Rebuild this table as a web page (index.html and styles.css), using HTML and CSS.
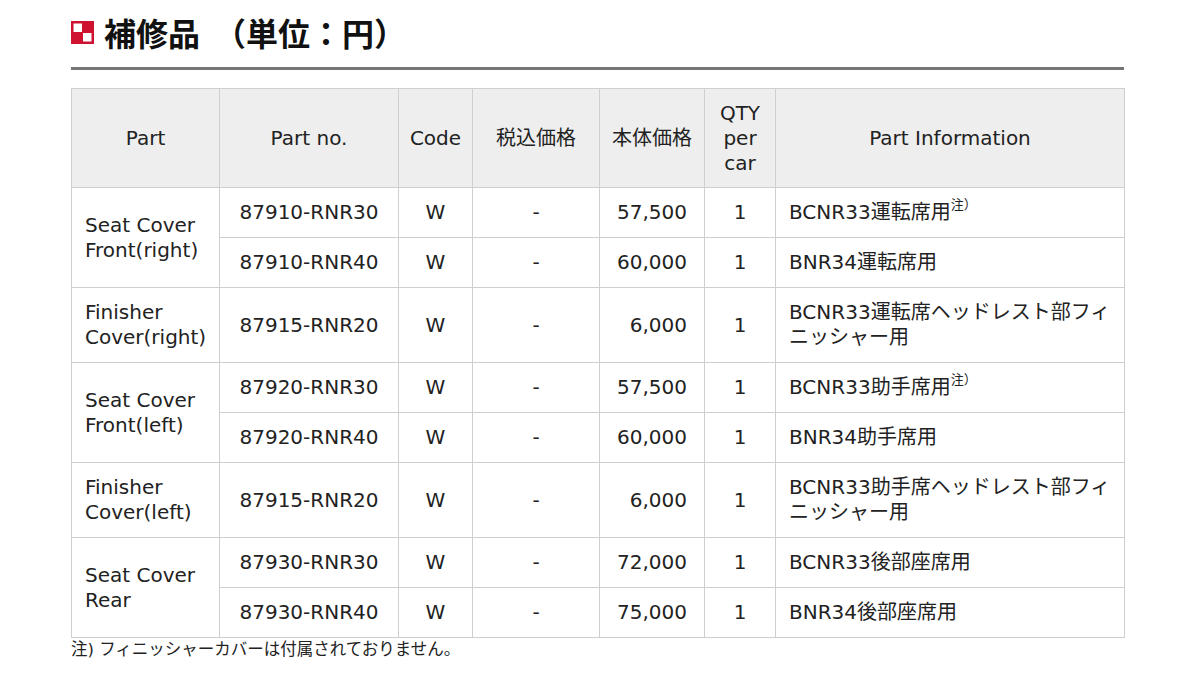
FILE: index.html
```html
<!DOCTYPE html>
<html lang="ja">
<head>
<meta charset="utf-8">
<title>補修品（単位：円）</title>
<link rel="stylesheet" href="styles.css">
</head>
<body>
<div class="page">
  <h2 class="title">
    <svg class="title-icon" width="23" height="23" viewBox="0 0 23 23" aria-hidden="true">
      <rect x="0" y="0" width="23" height="23" fill="#cf1230"/>
      <rect x="2.5" y="2.5" width="8.5" height="8.5" fill="#fff"/>
      <rect x="12" y="12" width="8.5" height="8.5" fill="#fff"/>
    </svg>
    <span class="title-text">補修品<span class="open-paren">（</span>単位：円）</span>
  </h2>

  <table class="parts">
    <colgroup>
      <col class="c-part">
      <col class="c-no">
      <col class="c-code">
      <col class="c-tax">
      <col class="c-price">
      <col class="c-qty">
      <col class="c-info">
    </colgroup>
    <thead>
      <tr>
        <th>Part</th>
        <th>Part no.</th>
        <th>Code</th>
        <th class="nowrap">税込価格</th>
        <th class="nowrap">本体価格</th>
        <th>QTY per car</th>
        <th>Part Information</th>
      </tr>
    </thead>
    <tbody>
      <tr>
        <td class="part" rowspan="2">Seat Cover<br>Front(right)</td>
        <td class="ctr">87910-RNR30</td>
        <td class="ctr">W</td>
        <td class="ctr">-</td>
        <td class="num">57,500</td>
        <td class="ctr">1</td>
        <td>BCNR33運転席用<sup>注）</sup></td>
      </tr>
      <tr>
        <td class="ctr">87910-RNR40</td>
        <td class="ctr">W</td>
        <td class="ctr">-</td>
        <td class="num">60,000</td>
        <td class="ctr">1</td>
        <td>BNR34運転席用</td>
      </tr>
      <tr>
        <td class="part">Finisher<br>Cover(right)</td>
        <td class="ctr">87915-RNR20</td>
        <td class="ctr">W</td>
        <td class="ctr">-</td>
        <td class="num">6,000</td>
        <td class="ctr">1</td>
        <td>BCNR33運転席ヘッドレスト部フィ<br>ニッシャー用</td>
      </tr>
      <tr>
        <td class="part" rowspan="2">Seat Cover<br>Front(left)</td>
        <td class="ctr">87920-RNR30</td>
        <td class="ctr">W</td>
        <td class="ctr">-</td>
        <td class="num">57,500</td>
        <td class="ctr">1</td>
        <td>BCNR33助手席用<sup>注）</sup></td>
      </tr>
      <tr>
        <td class="ctr">87920-RNR40</td>
        <td class="ctr">W</td>
        <td class="ctr">-</td>
        <td class="num">60,000</td>
        <td class="ctr">1</td>
        <td>BNR34助手席用</td>
      </tr>
      <tr>
        <td class="part">Finisher<br>Cover(left)</td>
        <td class="ctr">87915-RNR20</td>
        <td class="ctr">W</td>
        <td class="ctr">-</td>
        <td class="num">6,000</td>
        <td class="ctr">1</td>
        <td>BCNR33助手席ヘッドレスト部フィ<br>ニッシャー用</td>
      </tr>
      <tr>
        <td class="part" rowspan="2">Seat Cover<br>Rear</td>
        <td class="ctr">87930-RNR30</td>
        <td class="ctr">W</td>
        <td class="ctr">-</td>
        <td class="num">72,000</td>
        <td class="ctr">1</td>
        <td>BCNR33後部座席用</td>
      </tr>
      <tr>
        <td class="ctr">87930-RNR40</td>
        <td class="ctr">W</td>
        <td class="ctr">-</td>
        <td class="num">75,000</td>
        <td class="ctr">1</td>
        <td>BNR34後部座席用</td>
      </tr>
    </tbody>
  </table>

  <p class="footnote">注) フィニッシャーカバーは付属されておりません。</p>
</div>
</body>
</html>
```

FILE: styles.css
```css
html, body {
  margin: 0;
  padding: 0;
  background: #fff;
}

body {
  font-family: "DejaVu Sans", "Noto Sans CJK JP", sans-serif;
  color: #222;
}

.page {
  width: 1053px;
  margin-left: 71px;
}

.title {
  display: flex;
  align-items: center;
  gap: 10px;
  margin: 0;
  padding: 8px 0 11px;
  border-bottom: 3px solid #767676;
  font-family: "Noto Sans CJK JP", sans-serif;
  font-size: 32px;
  line-height: 48px;
  font-weight: 700;
  color: #111;
}

.open-paren {
  margin-left: 14px;
}

.title-icon {
  display: block;
  flex: 0 0 auto;
}

.parts {
  margin-top: 18px;
  width: 1053px;
  table-layout: fixed;
  border-collapse: collapse;
  font-size: 20px;
  line-height: 25px;
}

.c-part { width: 148px; }
.c-no { width: 179px; }
.c-code { width: 74px; }
.c-tax { width: 127px; }
.c-price { width: 105px; }
.c-qty { width: 71px; }
.c-info { width: 349px; }

.parts th,
.parts td {
  border: 1px solid #cfcfcf;
  padding: 12px 13px;
  vertical-align: middle;
  text-align: left;
}

.parts th {
  background: #eeeeee;
  font-weight: 400;
  text-align: center;
  color: #222;
  padding: 12px 6px 11px;
}

.parts th.nowrap {
  white-space: nowrap;
}

.parts td.ctr {
  text-align: center;
}

.parts td.num {
  text-align: right;
  padding-right: 17px;
}

.parts td.part {
  padding-right: 8px;
}

.parts sup {
  font-family: "Noto Sans CJK JP", sans-serif;
  font-size: 13px;
  line-height: 0;
  vertical-align: 10px;
}

.footnote {
  margin: 0;
  font-size: 16.5px;
  line-height: 24px;
  color: #222;
}
```
